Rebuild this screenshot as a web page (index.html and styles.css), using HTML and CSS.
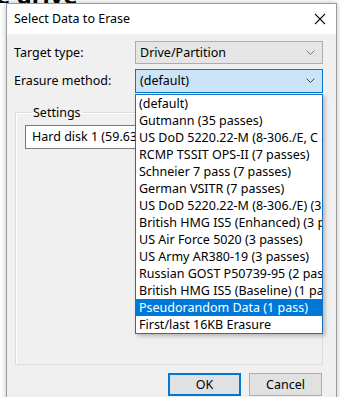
FILE: index.html
```html
<!DOCTYPE html>
<html lang="en">
<head>
    <meta charset="UTF-8">
    <title>Select Data to Erase</title>
    <link rel="stylesheet" href="styles.css">
</head>
<body>
<div class="backdrop">
    <div class="page-title"><span>e drive</span></div>
</div>

<div class="dialog">
    <div class="titlebar">
        <span class="title">Select Data to Erase</span>
        <svg class="close" width="12" height="12" viewBox="0 0 12 12">
            <path d="M1 1 L11 11 M11 1 L1 11" stroke="#111" stroke-width="1.1" fill="none"/>
        </svg>
    </div>

    <div class="content">
        <div class="row">
            <label class="label">Target type:</label>
            <div class="combo disabled">
                <span>Drive/Partition</span>
                <svg class="chevron" width="9" height="6" viewBox="0 0 9 6"><path d="M0.5 0.5 L4.5 4.5 L8.5 0.5" stroke="#777" fill="none"/></svg>
            </div>
        </div>
        <div class="row">
            <label class="label">Erasure method:</label>
            <div class="combo open">
                <span>(default)</span>
                <svg class="chevron" width="9" height="6" viewBox="0 0 9 6"><path d="M0.5 0.5 L4.5 4.5 L8.5 0.5" stroke="#444" fill="none"/></svg>
                <ul class="dropdown">
                    <li>(default)</li>
                    <li>Gutmann (35 passes)</li>
                    <li>US DoD 5220.22-M (8-306./E, C and E) (7 passes)</li>
                    <li>RCMP TSSIT OPS-II (7 passes)</li>
                    <li>Schneier 7 pass (7 passes)</li>
                    <li>German VSITR (7 passes)</li>
                    <li>US DoD 5220.22-M (8-306./E) (3 passes)</li>
                    <li>British HMG IS5 (Enhanced) (3 passes)</li>
                    <li>US Air Force 5020 (3 passes)</li>
                    <li>US Army AR380-19 (3 passes)</li>
                    <li>Russian GOST P50739-95 (2 passes)</li>
                    <li>British HMG IS5 (Baseline) (1 pass)</li>
                    <li class="selected">Pseudorandom Data (1 pass)</li>
                    <li>First/last 16KB Erasure</li>
                </ul>
            </div>
        </div>

        <fieldset class="settings">
            <legend>Settings</legend>
            <div class="textbox">Hard disk 1 (59.63 GB)</div>
        </fieldset>

        <div class="actions">
            <button class="btn default">OK</button>
            <button class="btn">Cancel</button>
        </div>
    </div>
</div>
</body>
</html>
```

FILE: styles.css
```css
* {
    box-sizing: border-box;
    margin: 0;
    padding: 0;
}

body {
    width: 340px;
    height: 397px;
    overflow: hidden;
    background-color: #ffffff;
    font-family: 'Noto Sans', 'Open Sans', sans-serif;
    font-size: 12px;
    color: #000;
}

.backdrop {
    height: 3px;
    overflow: hidden;
    position: relative;
}

.page-title {
    position: absolute;
    left: -4px;
    bottom: 0;
    font-size: 24px;
    font-weight: bold;
    line-height: 24px;
    height: 24px;
    margin-bottom: -4px;
}

.dialog {
    margin-left: 6px;
    width: 331px;
    height: 400px;
    border: 1px solid #9a9a9a;
    background-color: #f0f0f0;
    box-shadow: 0 0 6px rgba(0, 0, 0, 0.25);
}

.titlebar {
    height: 30px;
    background-color: #fff;
    display: flex;
    align-items: center;
    justify-content: space-between;
    padding: 0 10px 0 7px;
}

.title {
    font-size: 12.5px;
    margin-top: -2px;
}

.close {
    margin-top: -1px;
}

.content {
    padding: 7px 13px 0 7px;
}

.row {
    display: flex;
    align-items: center;
    height: 23px;
    margin-bottom: 5px;
}

.label {
    width: 121px;
    font-size: 12.5px;
}

.combo {
    position: relative;
    flex: 1;
    height: 23px;
    display: flex;
    align-items: center;
    justify-content: space-between;
    padding: 0 7px 0 4px;
    border: 1px solid #adadad;
    background-color: #e5e5e5;
    font-size: 12.5px;
}

.combo.open {
    border-color: #0078d7;
    background-color: #cce4f7;
    height: 24px;
}

.dropdown {
    position: absolute;
    left: -1px;
    right: -1px;
    top: 24px;
    list-style: none;
    background-color: #fff;
    border: 1px solid #1f6fbf;
    box-shadow: 2px 2px 4px rgba(0, 0, 0, 0.25);
    overflow: hidden;
    z-index: 5;
}

.dropdown li {
    height: 17px;
    line-height: 17px;
    padding-left: 3px;
    white-space: nowrap;
    font-size: 12.5px;
}

.dropdown li.selected {
    background-color: #0078d7;
    color: #fff;
}

.settings {
    margin: 12px 0 0 1px;
    height: 261px;
    border: 1px solid #dcdcdc;
    box-shadow: inset 1px 1px 0 #fff;
    padding: 0 9px;
}

.settings legend {
    margin-left: 6px;
    padding: 0 2px;
    font-size: 12.5px;
}

.textbox {
    margin-top: 4px;
    height: 24px;
    border: 1px solid #7a7a7a;
    background-color: #fff;
    padding-left: 6px;
    line-height: 22px;
    font-size: 12.5px;
    white-space: nowrap;
    overflow: hidden;
}

.actions {
    display: flex;
    justify-content: flex-end;
    gap: 8px;
    margin-top: 8px;
    margin-right: 1px;
}

.btn {
    width: 73px;
    height: 23px;
    border: 1px solid #adadad;
    background-color: #e1e1e1;
    font-family: inherit;
    font-size: 12.5px;
    color: #000;
}

.btn.default {
    border: 2px solid #0078d7;
}
```
